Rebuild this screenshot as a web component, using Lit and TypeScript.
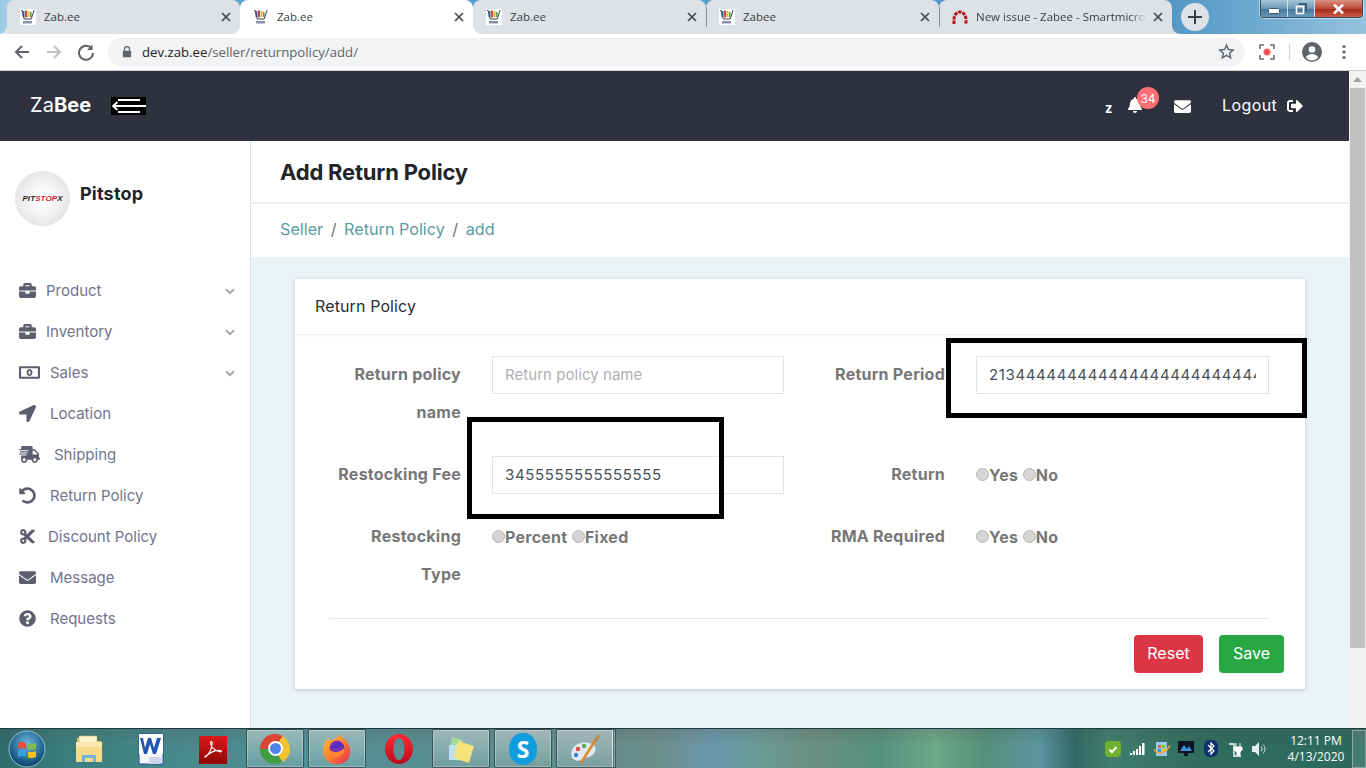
import { LitElement, html, css } from "lit";
import { customElement } from "lit/decorators.js";

const FA = {
  briefcase: ["0 0 512 512", "M320 336c0 8.84-7.16 16-16 16h-96c-8.84 0-16-7.16-16-16v-48H0v144c0 25.6 22.4 48 48 48h416c25.6 0 48-22.4 48-48V288H320v48zm144-208h-80V80c0-25.6-22.4-48-48-48H176c-25.6 0-48 22.4-48 48v48H48c-25.6 0-48 22.4-48 48v80h512v-80c0-25.6-22.4-48-48-48zm-144 0H192V96h128v32z"],
  money: ["0 0 640 512", "M32 64h576a32 32 0 0 1 32 32v320a32 32 0 0 1-32 32H32a32 32 0 0 1-32-32V96a32 32 0 0 1 32-32z M64 128v256h512V128z M320 150c50 0 90 47 90 106s-40 106-90 106-90-47-90-106 40-106 90-106z M320 200c-20 0-30 25-30 56s10 56 30 56 30-25 30-56-10-56-30-56z"],
  location: ["0 0 512 512", "M444.52 3.52L28.74 195.42c-47.97 22.39-31.98 92.75 19.19 92.75h175.91v175.91c0 51.17 70.36 67.17 92.75 19.19l191.9-415.78c15.99-38.39-25.59-79.97-63.97-63.97z"],
  shipping: ["0 0 640 512", "M624 352h-16V243.9c0-12.7-5.1-24.9-14.1-33.9L494 110.1c-9-9-21.2-14.1-33.9-14.1H416V48c0-26.5-21.5-48-48-48H112C85.5 0 64 21.5 64 48v48H8c-4.4 0-8 3.6-8 8v16c0 4.4 3.6 8 8 8h272c4.4 0 8 3.6 8 8v16c0 4.4-3.6 8-8 8H40c-4.4 0-8 3.6-8 8v16c0 4.4 3.6 8 8 8h208c4.4 0 8 3.6 8 8v16c0 4.4-3.6 8-8 8H8c-4.4 0-8 3.6-8 8v16c0 4.4 3.6 8 8 8h208c4.4 0 8 3.6 8 8v16c0 4.4-3.6 8-8 8H64v128c0 53 43 96 96 96s96-43 96-96h128c0 53 43 96 96 96s96-43 96-96h48c8.8 0 16-7.2 16-16v-32c0-8.8-7.2-16-16-16zM160 464c-26.5 0-48-21.5-48-48s21.5-48 48-48 48 21.5 48 48-21.5 48-48 48zm320 0c-26.5 0-48-21.5-48-48s21.5-48 48-48 48 21.5 48 48-21.5 48-48 48zm80-208H416V144h44.1l99.9 99.9V256z"],
  undo: ["0 0 512 512", "M255.545 8c-66.269.119-126.438 26.233-170.86 68.685L48.971 40.971C33.851 25.851 8 36.559 8 57.941V192c0 13.255 10.745 24 24 24h134.059c21.382 0 32.09-25.851 16.971-40.971l-41.75-41.75c30.864-28.899 70.801-44.907 113.23-45.273 92.398-.798 170.283 73.977 169.484 169.442C423.236 348.009 349.816 424 256 424c-41.127 0-79.997-14.678-110.63-41.556-4.743-4.161-11.906-3.908-16.368.553L89.34 422.659c-4.872 4.872-4.631 12.815.482 17.433C133.798 479.813 192.074 504 256 504c136.966 0 247.999-111.033 248-247.998C504.001 119.193 392.354 7.755 255.545 8z"],
  cut: ["0 0 448 512", "M278.06 256L444.48 89.57c4.69-4.69 4.69-12.29 0-16.97-32.8-32.8-85.99-32.8-118.79 0L210.18 188.12l-24.86-24.86c4.31-10.92 6.68-22.81 6.68-35.26 0-53.02-42.98-96-96-96S0 74.98 0 128s42.98 96 96 96c4.54 0 8.99-.32 13.36-.93L142.29 256l-32.93 32.93c-4.37-.61-8.83-.93-13.36-.93-53.02 0-96 42.98-96 96s42.98 96 96 96 96-42.98 96-96c0-12.45-2.37-24.34-6.68-35.26l24.86-24.86L325.69 439.4c32.8 32.8 85.99 32.8 118.79 0 4.69-4.68 4.69-12.28 0-16.97L278.06 256zM96 160c-17.64 0-32-14.36-32-32s14.36-32 32-32 32 14.36 32 32-14.36 32-32 32zm0 256c-17.64 0-32-14.36-32-32s14.36-32 32-32 32 14.36 32 32-14.36 32-32 32z"],
  envelope: ["0 0 512 512", "M502.3 190.8c3.9-3.1 9.7-.2 9.7 4.7V400c0 26.5-21.5 48-48 48H48c-26.5 0-48-21.5-48-48V195.6c0-5 5.7-7.8 9.7-4.7 22.4 17.4 52.1 39.5 154.1 113.6 21.1 15.4 56.7 47.8 92.2 47.6 35.7.3 72-32.8 92.3-47.6 102-74.1 131.6-96.3 154-113.7zM256 320c23.2.4 56.6-29.2 73.4-41.4 132.7-96.3 142.8-104.7 173.4-128.7 5.8-4.5 9.2-11.5 9.2-18.9v-19c0-26.5-21.5-48-48-48H48C21.5 64 0 85.5 0 112v19c0 7.4 3.4 14.3 9.2 18.9 30.6 23.9 40.7 32.4 173.4 128.7 16.8 12.2 50.2 41.8 73.4 41.4z"],
  question: ["0 0 512 512", "M504 256c0 136.997-111.043 248-248 248S8 392.997 8 256C8 119.083 119.043 8 256 8s248 111.083 248 248zM262.655 90c-54.497 0-89.255 22.957-116.549 63.758-3.536 5.286-2.353 12.415 2.715 16.258l34.699 26.31c5.205 3.947 12.621 3.008 16.665-2.122 17.864-22.658 30.113-35.797 57.303-35.797 20.429 0 45.698 13.148 45.698 32.958 0 14.976-12.363 22.667-32.534 33.976C247.128 238.528 216 254.941 216 296v4c0 6.627 5.373 12 12 12h56c6.627 0 12-5.373 12-12v-1.333c0-28.462 83.186-29.647 83.186-106.667 0-58.002-60.165-102-116.531-102zM256 338c-25.365 0-46 20.635-46 46 0 25.364 20.635 46 46 46s46-20.636 46-46c0-25.365-20.635-46-46-46z"],
  bell: ["0 0 448 512", "M224 512c35.32 0 63.97-28.65 63.97-64H160.03c0 35.35 28.65 64 63.97 64zm215.39-149.71c-19.32-20.76-55.47-51.99-55.47-154.29 0-77.7-54.48-139.9-127.94-155.16V32c0-17.67-14.32-32-31.98-32s-31.98 14.33-31.98 32v20.84C118.56 68.1 64.08 130.3 64.08 208c0 102.3-36.15 133.53-55.47 154.29-6 6.45-8.66 14.16-8.61 21.71.11 16.4 12.98 32 32.1 32h383.8c19.12 0 32-15.6 32.1-32 .05-7.55-2.61-15.27-8.61-21.71z"],
  signout: ["0 0 512 512", "M497 273L329 441c-15 15-41 4.5-41-17v-96H152c-13.3 0-24-10.7-24-24v-96c0-13.3 10.7-24 24-24h136V88c0-21.4 25.9-32 41-17l168 168c9.3 9.4 9.3 24.6 0 34zM192 436v-40c0-6.6-5.4-12-12-12H96c-17.7 0-32-14.3-32-32V160c0-17.7 14.3-32 32-32h84c6.6 0 12-5.4 12-12V76c0-6.6-5.4-12-12-12H96c-53 0-96 43-96 96v192c0 53 43 96 96 96h84c6.6 0 12-5.4 12-12z"],
};
type IconName = keyof typeof FA;
const fa = (n: IconName, w: number) =>
  html`<svg class="fa" viewBox=${FA[n][0]} width=${w} height=${w}><path fill="currentColor" fill-rule="evenodd" d=${FA[n][1]}></path></svg>`;

const MENU: { icon: IconName; label: string; size: number; slot: number; caret?: boolean }[] = [
  { icon: "briefcase", label: "Product", size: 17, slot: 27, caret: true },
  { icon: "briefcase", label: "Inventory", size: 17, slot: 27, caret: true },
  { icon: "money", label: "Sales", size: 21, slot: 31, caret: true },
  { icon: "location", label: "Location", size: 17, slot: 31 },
  { icon: "shipping", label: "Shipping", size: 21, slot: 35 },
  { icon: "undo", label: "Return Policy", size: 17, slot: 31 },
  { icon: "cut", label: "Discount Policy", size: 17, slot: 29 },
  { icon: "envelope", label: "Message", size: 17, slot: 31 },
  { icon: "question", label: "Requests", size: 17, slot: 31 },
];

const cartFav = html`<svg class="fav" viewBox="0 0 16 16" width="16" height="16">
  <rect width="16" height="16" fill="#fff"></rect>
  <rect x="2.500" y="2" width="2" height="6" fill="#3d6fc4"></rect>
  <rect x="5" y="1.500" width="2" height="7" fill="#d04a3a"></rect>
  <rect x="7.500" y="2" width="2" height="6" fill="#e2b53a"></rect>
  <rect x="10" y="3" width="1.600" height="5" fill="#58a84a"></rect>
  <path d="M1 1.500h1.200l2 8.500h7l3-9" fill="none" stroke="#3a3f55" stroke-width="1"></path>
  <rect x="3" y="12" width="9" height="2.500" fill="#8892a8"></rect>
</svg>`;
const arcFav = html`<svg class="fav" viewBox="0 0 16 16" width="16" height="16">
  <path d="M2 15V11C2 5.500 5 3 8 3s6 2.500 6 8v4" fill="none" stroke="#b8121c" stroke-width="3" stroke-dasharray="3.400 1"></path>
</svg>`;

const TABS = [
  { t: "Zab.ee", icon: cartFav },
  { t: "Zab.ee", icon: cartFav, active: true },
  { t: "Zab.ee", icon: cartFav },
  { t: "Zabee", icon: cartFav },
  { t: "New issue - Zabee - Smartmicro", icon: arcFav },
];

const closeX = html`<svg class="tabx" viewBox="0 0 10 10" width="10" height="10"><path d="M1 1l8 8M9 1l-8 8" stroke="#45484d" stroke-width="1.700" fill="none"></path></svg>`;

const TASK = [
  { k: "folder", btn: false, i: html`<svg viewBox="0 0 32 32" width="32" height="32"><path d="M4 5h10l2 3h12v6H4z" fill="#d9c26c"></path><rect x="6" y="3" width="18" height="7" fill="#fbf3cf" stroke="#c8ad54" stroke-width=".6"></rect><path d="M3 9h26v20H3z" fill="#f6dc8a"></path><path d="M3 9h26v5H3z" fill="#fbe9ae"></path><path d="M9 22h14v7h-3v-4h-8v4H9z" fill="#6eb4dc"></path></svg>` },
  { k: "word", btn: false, i: html`<svg viewBox="0 0 32 32" width="32" height="32"><path d="M4 1h24v30H4z" fill="#f4f6fb" stroke="#1e4f9e"></path><path d="M4 1h24v20H4z" fill="#fff"></path><path d="M5 5l4 16h3l3-10 3 10h3l5-16h-4l-3 10-3-10h-3l-3 10-2-10z" fill="#1f55b0"></path><path d="M14 24h11l3 3-4 4H14z" fill="#cfd8ea"></path></svg>` },
  { k: "pdf", btn: false, i: html`<svg viewBox="0 0 30 32" width="28" height="32"><defs><linearGradient id="pg" x1="0" y1="0" x2="0" y2="1"><stop offset="0" stop-color="#dd1b1b"></stop><stop offset="1" stop-color="#8c0606"></stop></linearGradient></defs><rect x="0" y="2" width="30" height="30" fill="url(#pg)"></rect><path d="M6 25c4-2 7-8 8-14 .5-3-1-4-1.500-2-.7 3 3 9 10 10 2 .2 2-1.500 0-1.700-4-.3-11 2-16 7z" fill="none" stroke="#fff" stroke-width="1.200"></path></svg>` },
  { k: "chrome", btn: true, i: html`<span class="chrome"><span></span></span>` },
  { k: "ff", btn: true, i: html`<svg viewBox="0 0 32 32" width="32" height="32"><defs><linearGradient id="fg" x1="0" y1="0" x2="1" y2="1"><stop offset="0" stop-color="#ffc53a"></stop><stop offset=".55" stop-color="#ff7a2e"></stop><stop offset="1" stop-color="#e0245e"></stop></linearGradient></defs><path d="M3 12C4 8 6 6 8 5c-.5 2 0 3 1 3 3-2 8-3 11-7-.5 3 3 4 6 8 4 5 4 12 1 17-3 4-7 5-12 5C8 31 2 25 2 18c0-2 0-4 1-6z" fill="url(#fg)"></path><circle cx="16" cy="15" r="7.500" fill="#7b2fb6"></circle><path d="M9.500 14c2-1 4-4 7-4 3 0 6 1 7 5-2-2-4-2-6-1-1 1-4 2-8 0z" fill="#4a2ec0"></path><path d="M8 16c3 4 9 4 13 1 1-.7 2-2 2.500-1 0 4-4 8-8 8-4 0-7-3-7.500-8z" fill="#ff8a2a"></path></svg>` },
  { k: "opera", btn: false, i: html`<svg viewBox="0 0 30 32" width="30" height="32"><defs><linearGradient id="og" x1="0" y1="0" x2="0" y2="1"><stop offset="0" stop-color="#ff2b35"></stop><stop offset="1" stop-color="#b80b1e"></stop></linearGradient></defs><path fill-rule="evenodd" d="M15 1c8 0 14 7 14 15s-6 15-14 15S1 24 1 16 7 1 15 1zm0 4c-3.500 0-5.500 5-5.500 11S11.500 27 15 27s5.500-5 5.500-11S18.500 5 15 5z" fill="url(#og)"></path></svg>` },
  { k: "sticky", btn: true, i: html`<svg viewBox="0 0 32 32" width="32" height="32"><path d="M7 4l11 3-4 14-9-2z" fill="#a5dc9c"></path><path d="M4 12h16v15H4z" fill="#c3e0f4" opacity=".95"></path><path d="M13 8l16 5-5 17-15-5z" fill="#f6e27a"></path></svg>` },
  { k: "skype", btn: true, i: html`<span class="skype">S</span>` },
  { k: "paint", btn: true, i: html`<svg viewBox="0 0 32 32" width="32" height="32"><path d="M16 9C8 9 2 14 2 21c0 5 4 7 7 7 4 0 4-3 7-3 5 0 11-4 11-9 0-4-5-7-11-7z" fill="#dfe9f0" stroke="#8ba5b6" stroke-width=".6"></path><circle cx="9" cy="16" r="2.200" fill="#d8493f"></circle><circle cx="15" cy="13" r="2.200" fill="#5ba84d"></circle><circle cx="7" cy="22" r="2.200" fill="#3f7fcf"></circle><path d="M12 30L27 6" stroke="#e08a2a" stroke-width="2.500"></path><path d="M25 7l4-6 2 2-3 6z" fill="#b98a5a"></path></svg>` },
];

const radio = (label: string) => html`<label class="opt"><input type="radio" tabindex="-1" />${label}</label>`;

@customElement("app-root")
export class AppRoot extends LitElement {
  static styles = css`
    :host { display: block; width: 1366px; height: 768px; overflow: hidden; font-family: "Inter", "Noto Sans", sans-serif; position: relative; background: #fff; }
    * { box-sizing: border-box; }
    svg { display: block; flex: none; }
    .root { display: flex; flex-direction: column; width: 1366px; height: 768px; }

    /* Browser tabs */
    .strip { height: 34px; flex: none; display: flex; padding-left: 7px; position: relative; font-family: "Open Sans", sans-serif;
      background: linear-gradient(90deg, #9ccbe6 0, #a6cfe6 1%, #5b9fca 18%, #4f97c3 85%, #6ea9d0 92%, #95c2dd 100%); }
    .tab { width: 233px; height: 34px; background: #dee1e6; border-radius: 8px 8px 0 0; display: flex; align-items: center; padding: 0 9px 0 13px; position: relative; font-size: 11.500px; color: #3c4043; }
    .tab.active { background: #fff; z-index: 2; }
    .tab.sep::after { content: ""; position: absolute; right: -1px; top: 7px; height: 20px; width: 1px; background: #8a8d92; z-index: 1; }
    .tab.active::before, .tab.active::after { content: ""; position: absolute; bottom: 0; width: 8px; height: 8px; }
    .tab.active::before { left: -8px; background: radial-gradient(circle at 0 0, transparent 7.500px, #fff 8px); }
    .tab.active::after { right: -8px; background: radial-gradient(circle at 100% 0, transparent 7.500px, #fff 8px); }
    .tab.first::before { content: ""; position: absolute; bottom: 0; width: 8px; height: 8px; left: -8px; background: radial-gradient(circle at 0 0, transparent 7.500px, #dee1e6 8px); }
    .tab.last::after { content: ""; position: absolute; bottom: 0; width: 8px; height: 8px; right: -8px; background: radial-gradient(circle at 100% 0, transparent 7.500px, #dee1e6 8px); }
    .tab .ttl { flex: 1; margin-left: 8px; white-space: nowrap; overflow: hidden; padding-bottom: 2px; }
    .tab.last .ttl { -webkit-mask-image: linear-gradient(90deg, #000 90%, transparent); mask-image: linear-gradient(90deg, #000 90%, transparent); margin-right: 6px; }
    .newtab { width: 28px; height: 28px; border-radius: 50%; background: #dee1e6; margin: 3px 0 0 9px; display: flex; align-items: center; justify-content: center; flex: none; }
    .win { position: absolute; right: 3px; top: 0; width: 103px; height: 18px; display: flex; border: 1px solid #2c4a60; border-top: 0; border-radius: 0 0 4px 4px; overflow: hidden; box-shadow: 0 0 0 1px rgba(255,255,255,.5); }
    .win div { display: flex; align-items: center; justify-content: center; }
    .win .mn, .win .mx { width: 27px; background: linear-gradient(#a7c6d9, #6b97b3 50%, #44789c 55%, #6a9ab9); border-right: 1px solid #cfe0ea; }
    .win .mn { align-items: flex-end; padding-bottom: 3px; }
    .win .cl { flex: 1; background: linear-gradient(#d99084, #c0493a 50%, #a62c1e 55%, #cf5a45); }

    /* Browser toolbar */
    .bar { height: 37px; flex: none; background: #fff; border-bottom: 1px solid #d0d2d5; display: flex; align-items: center; padding: 0 0 1px 13px; }
    .nav { display: flex; align-items: center; width: 95px; flex: none; gap: 14px; }
    .omni { width: 1137px; height: 28px; border-radius: 14px; background: #f1f3f4; display: flex; align-items: center; padding: 0 10px 0 14px; flex: none; font: 13.200px "Open Sans", sans-serif; color: #5f6368; }
    .omni b { font-weight: 400; color: #202124; }
    .omni .url { margin-left: 10px; flex: 1; }
    .tools { display: flex; align-items: center; flex: none; padding-left: 12px; }

    /* Page */
    .page { flex: 1; min-height: 0; display: flex; }
    .app { flex: 1; min-width: 0; display: flex; flex-direction: column; }
    .scroll { width: 17px; flex: none; background: #f1f1f1; display: flex; flex-direction: column; align-items: center; }
    .scroll .up { height: 17px; display: flex; align-items: center; justify-content: center; flex: none; }
    .scroll .thumb { width: 15px; height: 560px; background: #c1c1c1; }
    .top { height: 70px; flex: none; background: #2f323e; display: flex; align-items: center; color: #fff; padding: 0 46px 0 30px; }
    .brand { font-size: 20px; font-weight: 400; padding-bottom: 2px; letter-spacing: .05px; }
    .brand b { font-weight: 700; }
    .burger { margin-left: 20px; margin-top: -1px; }
    .top .right { margin-left: auto; display: flex; align-items: center; }
    .z { font: 700 13px "Inter", sans-serif; width: 22px; margin-top: 3px; }
    .bellwrap { position: relative; width: 17px; height: 18px; }
    .badge { position: absolute; left: 10px; top: -10px; width: 22px; height: 22px; border-radius: 50%; background: #fb6e73; font-size: 12px; display: flex; align-items: center; justify-content: center; }
    .mail { margin-left: 30px; }
    .logout { margin-left: 31px; font-size: 16px; width: 65px; white-space: nowrap; letter-spacing: .4px; padding-bottom: 2px; }
    .body { flex: 1; min-height: 0; display: flex; }

    /* Sidebar */
    .side { width: 251px; flex: none; background: #fff; border-right: 1px solid #d9dee2; padding: 30px 0 0 0; }
    .who { display: flex; padding-left: 15px; height: 100px; }
    .avatar { width: 55px; height: 55px; border-radius: 50%; background: radial-gradient(circle, #fff 15%, #d8d8d8 100%); display: flex; align-items: center; justify-content: center; font: italic 800 8px "Liberation Sans", sans-serif; color: #222; letter-spacing: .1px; flex: none; }
    .avatar i { color: #d8202a; }
    .who .name { margin: 12px 0 0 10px; font-size: 18px; font-weight: 700; color: #212529; letter-spacing: .2px; }
    .row { height: 41px; display: flex; align-items: center; padding: 0 15px 0 19px; color: #5c5e6d; }
    .row .lbl { color: #71748d; font-size: 15px; flex: 1; padding-bottom: 2px; }
    .row .slot { flex: none; margin-top: -2px; }

    /* Content */
    .main { flex: 1; min-width: 0; background: #ecf3f7; display: flex; flex-direction: column; }
    .title { height: 63px; flex: none; background: #fff; border-bottom: 2px solid #eceff2; padding: 1px 0 0 29px; display: flex; align-items: center; font-size: 22px; font-weight: 700; color: #212529; letter-spacing: -.2px; }
    .crumb { height: 53px; flex: none; background: #fff; padding: 0 0 4px 29px; display: flex; align-items: center; font-size: 16.200px; color: #5a9ba3; gap: 7.500px; }
    .crumb span { color: #6c757d; }
    .content { padding: 22px 44px 0; }
    .card { background: #fff; box-shadow: 0 1px 4px rgba(60,70,80,.28); }
    .chead { height: 56px; padding: 0 20px 2px; display: flex; align-items: center; font-size: 16px; color: #2a2d33; letter-spacing: .12px; border-bottom: 1px solid #eef0f2; box-shadow: 0 1px 2px rgba(0,0,0,.03); }
    .cbody { padding: 21px 0 16px 34px; }
    .grid { display: grid; grid-template-columns: 132px 292px 130px 293px; column-gap: 31px; row-gap: 24px; }
    .f { text-align: right; font-size: 16px; font-weight: 700; line-height: 38px; color: #777; white-space: nowrap; letter-spacing: .25px; margin: -1px 0 1px; }
    .in { width: 100%; height: 38px; border: 1px solid #e1e3e8; padding: 0 12px 1px; font: 15px "Inter", sans-serif; color: #495057; outline: none; background: #fff; letter-spacing: .63px; border-radius: 0; display: block; }
    .in::placeholder { color: #adb0b5; opacity: 1; letter-spacing: .05px; }
    .opts { display: flex; align-items: center; height: 38px; gap: 4.500px; }
    .opt { display: flex; align-items: center; font-size: 16px; font-weight: 700; color: #777; letter-spacing: .25px; }
    .opt input { appearance: none; -webkit-appearance: none; margin: -2px 0 0 0; width: 13px; height: 13px; border-radius: 50%; background: #d6d6d6; border: 1px solid #b5b5b5; flex: none; }
    hr { width: 941px; height: 1px; margin: 24px 0 16px; border: 0; background: #e6e7ea; }
    .acts { display: flex; justify-content: flex-end; gap: 16px; padding-right: 21px; }
    .btn { height: 38px; border: 0; border-radius: 4px; color: #fff; font: 16px "Inter", sans-serif; padding: 0 0 2px; }
    .reset { width: 69px; background: #dc3545; }
    .save { width: 65px; background: #28a745; }

    /* Reviewer's markup drawn over the page */
    .mark { position: absolute; border: 5px solid #000; pointer-events: none; z-index: 5; }
    .m1 { left: 946px; top: 338px; width: 361px; height: 80px; }
    .m2 { left: 467px; top: 417px; width: 257px; height: 102px; }

    /* Windows taskbar */
    .task { height: 40px; flex: none; display: flex; align-items: center; border-top: 1px solid #20383f;
      background:
        linear-gradient(180deg, rgba(90,70,70,.18), rgba(90,70,70,0) 45%),
        linear-gradient(90deg, #2d6a6c 0, #3a7d7c 60px, #47888a 170px, #4f8f93 300px, #568e92 400px, #628d8c 600px, #6d8d88 650px, #6a98ad 715px, #6a9c9c 750px, #6b9081 810px, #55917f 880px, #6ba98a 935px, #53917c 985px, #5a95a0 1040px, #2f6a68 1075px, #3f7f6c 1110px, #2f6c5e 1200px, #2b6a5d 100%); position: relative; }
    .orb { width: 58px; display: flex; justify-content: center; padding-right: 4px; flex: none; }
    .slot2 { width: 62px; height: 39px; display: flex; align-items: center; justify-content: center; flex: none; }
    .slot2.btn2 { border: 1px solid rgba(20,45,50,.7); border-radius: 2px; background: linear-gradient(rgba(255,255,255,.42), rgba(255,255,255,.14)); box-shadow: inset 0 0 0 1px rgba(255,255,255,.3); width: 58px; margin: 0 2px; }
    .sliver { width: 4px; height: 39px; flex: none; margin-left: -4px; border: 1px solid rgba(20,45,50,.6); border-left-color: rgba(255,255,255,.4); background: rgba(255,255,255,.2); }
    .chrome { width: 30px; height: 30px; border-radius: 50%; background: conic-gradient(from 30deg, #f2c230 0 120deg, #3f9e44 120deg 240deg, #db4437 240deg 360deg); display: flex; align-items: center; justify-content: center; }
    .chrome span { width: 15px; height: 15px; border-radius: 50%; background: #4e83ee; border: 2.500px solid #fff; }
    .skype { width: 28px; height: 32px; border-radius: 48%; background: #0f9ddd; color: #fff; font: 700 23px "Open Sans", sans-serif; display: flex; align-items: center; justify-content: center; }
    .tray { margin-left: auto; display: flex; align-items: center; flex: none; height: 39px; }
    .tray .ti { width: 24.500px; display: flex; justify-content: center; flex: none; }
    .clock { width: 80px; color: #fff; font: 12px/16px "Open Sans", sans-serif; text-align: center; padding-left: 8px; }
    .desk { width: 14px; height: 38px; flex: none; border: 1px solid rgba(255,255,255,.35); background: rgba(255,255,255,.12); }
  `;

  render() {
    return html`
      <div class="root">
        <div class="strip">
          ${TABS.map((t, i) => html`
            <div class="tab ${t.active ? "active" : ""} ${i === 0 ? "first" : ""} ${i === TABS.length - 1 ? "last" : ""} ${i === 2 || i === 3 ? "sep" : ""}">
              ${t.icon}<span class="ttl">${t.t}</span>${closeX}
            </div>`)}
          <div class="newtab"><svg viewBox="0 0 14 14" width="14" height="14"><path d="M7 0v14M0 7h14" stroke="#3c4043" stroke-width="2"></path></svg></div>
          <div class="win">
            <div class="mn"><svg viewBox="0 0 12 6" width="12" height="6"><rect x=".5" y=".5" width="11" height="5" rx="1" fill="#fff" stroke="#3a5a70"></rect></svg></div>
            <div class="mx"><svg viewBox="0 0 12 12" width="12" height="12"><path d="M3.500 1h7.500v7.500" fill="none" stroke="#2f4a5c" stroke-width="1.500"></path><rect x="1.500" y="3.500" width="7" height="7" fill="none" stroke="#fff" stroke-width="1.600"></rect></svg></div>
            <div class="cl"><svg viewBox="0 0 12 10" width="13" height="10"><path d="M1.500 .5l9 9M10.500 .5l-9 9" stroke="#fff" stroke-width="2.600"></path></svg></div>
          </div>
        </div>
        <div class="bar">
          <div class="nav">
            <svg viewBox="0 0 18 18" width="18" height="18"><path d="M16 9H3M9 3L3 9l6 6" fill="none" stroke="#5f6368" stroke-width="2"></path></svg>
            <svg viewBox="0 0 18 18" width="18" height="18"><path d="M2 9h13M9 3l6 6-6 6" fill="none" stroke="#bdc1c6" stroke-width="2"></path></svg>
            <svg viewBox="0 0 18 18" width="18" height="18"><path d="M14.500 5.500A7 7 0 1 0 16 10" fill="none" stroke="#5f6368" stroke-width="2"></path><path d="M15.500 1.500v5.500h-5.500z" fill="#5f6368"></path></svg>
          </div>
          <div class="omni">
            <svg viewBox="0 0 12 14" width="10" height="13"><path d="M3 6V4a3 3 0 0 1 6 0v2" fill="none" stroke="#5f6368" stroke-width="1.500"></path><rect x="1" y="6" width="10" height="8" rx="1" fill="#5f6368"></rect></svg>
            <span class="url"><b>dev.zab.ee</b>/seller/returnpolicy/add/</span>
            <svg viewBox="0 0 24 24" width="17" height="17"><path d="M12 3l2.700 6.200 6.800.6-5.100 4.500 1.500 6.600L12 17.400l-5.900 3.500 1.500-6.600-5.100-4.500 6.800-.6z" fill="none" stroke="#5f6368" stroke-width="2"></path></svg>
          </div>
          <div class="tools">
            <svg viewBox="0 0 16 16" width="16" height="16" style="margin-left:2px"><path d="M1 5V1h4M11 1h4v4M15 11v4h-4M5 15H1v-4" fill="none" stroke="#6a6d72" stroke-width="1.500"></path><circle cx="8" cy="8" r="3.500" fill="#f1645d"></circle><circle cx="8" cy="8" r="1.500" fill="#e8342e"></circle></svg>
            <span style="width:1px;height:16px;background:#cfd1d4;margin-left:14px"></span>
            <svg viewBox="0 0 20 20" width="20" height="20" style="margin-left:12px"><circle cx="10" cy="10" r="10" fill="#5f6368"></circle><circle cx="10" cy="7.500" r="3.300" fill="#fff"></circle><path d="M3.800 15.500c1.400-2.600 3.700-3.500 6.200-3.500s4.800.9 6.200 3.500A8 8 0 0 1 10 18.500a8 8 0 0 1-6.200-3" fill="#fff"></path></svg>
            <svg viewBox="0 0 4 16" width="4" height="16" style="margin-left:20px"><circle cx="2" cy="2.500" r="1.600" fill="#5f6368"></circle><circle cx="2" cy="8" r="1.600" fill="#5f6368"></circle><circle cx="2" cy="13.500" r="1.600" fill="#5f6368"></circle></svg>
          </div>
        </div>
        <div class="page">
          <div class="app">
            <div class="top">
              <div class="brand">Za<b>Bee</b></div>
              <svg class="burger" viewBox="0 0 35 18" width="35" height="18"><rect width="35" height="18" fill="#000"></rect><path d="M7 3h22M2 9h33M7 15h22" stroke="#fff" stroke-width="2"></path><path d="M6.500 5L2 9l4.500 4" fill="none" stroke="#fff" stroke-width="1.800"></path></svg>
              <div class="right">
                <span class="z">z</span>
                <div class="bellwrap">${fa("bell", 16)}<span class="badge">34</span></div>
                <span class="mail">${fa("envelope", 17)}</span>
                <span class="logout">Logout</span>
                ${fa("signout", 16)}
              </div>
            </div>
            <div class="body">
              <aside class="side">
                <div class="who">
                  <div class="avatar"><span>PIT<i>STOP</i>X</span></div>
                  <div class="name">Pitstop</div>
                </div>
                ${MENU.map((m) => html`
                  <div class="row">
                    <span class="slot" style="width:${m.slot}px">${fa(m.icon, m.size)}</span>
                    <span class="lbl">${m.label}</span>
                    ${m.caret ? html`<svg viewBox="0 0 10 7" width="10" height="7"><path d="M1 1.200l4 4 4-4" fill="none" stroke="#a5a7ad" stroke-width="2"></path></svg>` : ""}
                  </div>`)}
              </aside>
              <main class="main">
                <div class="title">Add Return Policy</div>
                <div class="crumb">Seller <span>/</span> Return Policy <span>/</span> add</div>
                <div class="content">
                  <section class="card">
                    <div class="chead">Return Policy</div>
                    <div class="cbody">
                      <div class="grid">
                        <div class="f">Return policy<br />name</div>
                        <div><input class="in" tabindex="-1" placeholder="Return policy name" /></div>
                        <div class="f">Return Period</div>
                        <div><input class="in" tabindex="-1" value="21344444444444444444444444444444444" /></div>

                        <div class="f">Restocking Fee</div>
                        <div><input class="in" tabindex="-1" value="3455555555555555" /></div>
                        <div class="f">Return</div>
                        <div class="opts">${radio("Yes")}${radio("No")}</div>

                        <div class="f">Restocking<br />Type</div>
                        <div class="opts">${radio("Percent")}${radio("Fixed")}</div>
                        <div class="f">RMA Required</div>
                        <div class="opts">${radio("Yes")}${radio("No")}</div>
                      </div>
                      <hr />
                      <div class="acts">
                        <button class="btn reset" tabindex="-1">Reset</button>
                        <button class="btn save" tabindex="-1">Save</button>
                      </div>
                    </div>
                  </section>
                </div>
              </main>
            </div>
          </div>
          <div class="scroll">
            <div class="up"><svg viewBox="0 0 9 5" width="9" height="5"><path d="M4.500 0L9 5H0z" fill="#a3a3a3"></path></svg></div>
            <div class="thumb"></div>
          </div>
        </div>
        <footer class="task">
          <div class="orb">
            <svg viewBox="0 0 38 38" width="38" height="38"><defs><radialGradient id="og2" cx=".5" cy=".35" r=".7"><stop offset="0" stop-color="#6fb6dc"></stop><stop offset=".7" stop-color="#1c5e8c"></stop><stop offset="1" stop-color="#0c3450"></stop></radialGradient></defs><circle cx="19" cy="19" r="18" fill="url(#og2)" stroke="#8fc4d8" stroke-width="1"></circle><path d="M10 13c3-1.500 5-1 8 0v6c-3-1-5-1.500-8 0z" fill="#e8503a"></path><path d="M20 13.500c3 1 5 .5 8-.5v6c-3 1-5 1.500-8 .5z" fill="#7fc043"></path><path d="M10 21c3-1.500 5-1 8 0v6c-3-1-5-1.500-8 0z" fill="#3a9fe0"></path><path d="M20 21.500c3 1 5 .5 8-.5v6c-3 1-5 1.500-8 .5z" fill="#f5c02c"></path></svg>
          </div>
          ${TASK.map((t) => html`<div class="slot2 ${t.btn ? "btn2" : ""}">${t.i}</div>`)}
          <div class="sliver"></div>
          <div class="tray">
            <span class="ti"><svg viewBox="0 0 16 16" width="16" height="16"><rect width="16" height="16" rx="4" fill="#6fb02c"></rect><path d="M4.500 8.500l2.500 2.500 4.500-5" fill="none" stroke="#fff" stroke-width="2"></path></svg></span>
            <span class="ti"><svg viewBox="0 0 15 12" width="15" height="12"><path d="M0 10h2v2H0zM3 8h2v4H3zM6 6h2v6H6zM9 3h2v9H9zM12 0h2.500v12H12z" fill="#fff"></path></svg></span>
            <span class="ti"><svg viewBox="0 0 16 16" width="16" height="16"><rect x="2" y="1" width="11" height="14" fill="#9dc8ef"></rect><path d="M4 4h3v3H4z" fill="#e8603a"></path><path d="M8 4h3v3H8z" fill="#7fc043"></path><path d="M4 8h3v3H4z" fill="#3a8fe0"></path><path d="M8 8h3v3H8z" fill="#f5c02c"></path><path d="M0 8c3 6 12 5 16-4" fill="none" stroke="#f5a02c" stroke-width="1.500"></path></svg></span>
            <span class="ti"><svg viewBox="0 0 16 15" width="16" height="15"><rect width="16" height="12" fill="#0b1522"></rect><path d="M2 10l4-6 3 4 2-3 3 5z" fill="#3f8fe0"></path><rect x="6" y="12" width="4" height="3" fill="#0b1522"></rect></svg></span>
            <span class="ti"><svg viewBox="0 0 14 17" width="14" height="17"><rect width="14" height="17" rx="6" fill="#0e2f6e"></rect><path d="M4 5l6 6-3 3V3l3 3-6 6" fill="none" stroke="#fff" stroke-width="1.200"></path></svg></span>
            <span class="ti"><svg viewBox="0 0 15 16" width="15" height="16"><path d="M1 3h5v12h7" fill="none" stroke="#fff" stroke-width="1.300"></path><path d="M6 6h8v3l-2 2v3H9v-3L6 9zM8 2v4M12 2v4" fill="#fff" stroke="#fff"></path></svg></span>
            <span class="ti"><svg viewBox="0 0 15 14" width="15" height="14"><path d="M0 4h3l4-4v14l-4-4H0z" fill="#e8eef0"></path><path d="M9 4.500a3.500 3.500 0 0 1 0 5M11 2.500a6 6 0 0 1 0 9" fill="none" stroke="#cfd8da" stroke-width="1"></path></svg></span>
            <div class="clock">12:11 PM<br />4/13/2020</div>
            <div class="desk"></div>
          </div>
        </footer>
      </div>
      <div class="mark m1"></div>
      <div class="mark m2"></div>
    `;
  }
}
